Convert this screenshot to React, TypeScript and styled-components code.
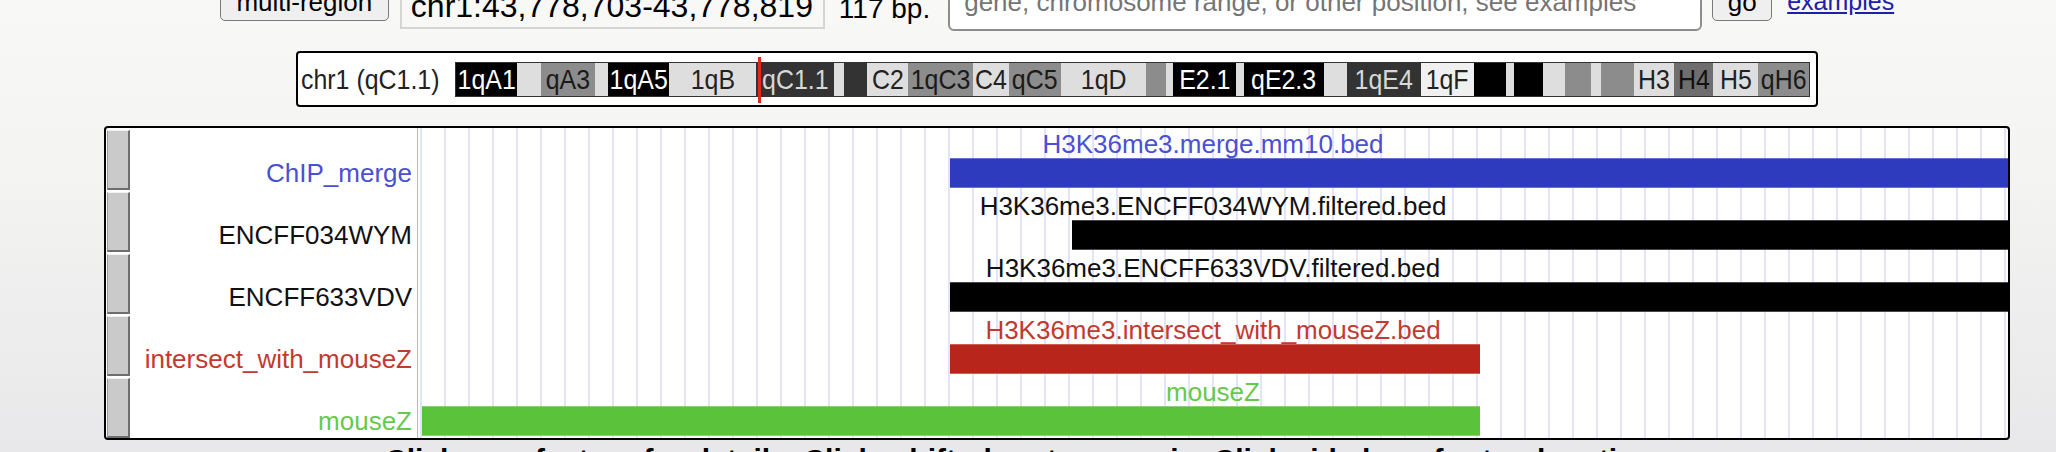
import React from "react";
import styled, { createGlobalStyle } from "styled-components";

// Browser page: position form, chromosome ideogram and track image

const GlobalStyle = createGlobalStyle`
  html, body {
    margin: 0;
    padding: 0;
  }
  body {
    width: 2056px;
    height: 452px;
    overflow: hidden;
    background: linear-gradient(#f8f8f6 0px, #f4f4f2 160px, #e8e8ea 452px);
    font-family: "Liberation Sans", Arial, Helvetica, sans-serif;
    color: #000;
  }
`;

const Page = styled.div`
  width: 1906px;
  margin-left: 104px;
  display: flex;
  flex-direction: column;
  align-items: center;
`;

/* ---------- top form ---------- */

const TopForm = styled.div`
  display: flex;
  align-items: flex-end;
  height: 58px;
  margin-top: -27px;
`;

const FormButton = styled.button<{ $w: number }>`
  width: ${(p) => p.$w}px;
  height: 38px;
  margin-bottom: 10px;
  padding: 0;
  border: 1px solid #7a7a7a;
  border-radius: 5px;
  background: #efefef;
  font-family: inherit;
  font-size: 26px;
  line-height: 36px;
  color: #000;
`;

const PositionBox = styled.div`
  box-sizing: border-box;
  width: 425px;
  height: 46px;
  margin-left: 11px;
  margin-bottom: 2px;
  padding-left: 9px;
  border: 2px solid #d5d5d3;
  font-size: 32px;
  line-height: 42px;
  white-space: nowrap;
`;

const SizeText = styled.span`
  margin-left: 14px;
  margin-bottom: 7px;
  font-size: 28px;
  line-height: 30px;
  white-space: nowrap;
`;

const SearchInput = styled.input`
  box-sizing: border-box;
  width: 754px;
  height: 58px;
  margin-left: 18px;
  padding: 0 0 0 14px;
  border: 2px solid #8d8d8d;
  border-radius: 6px;
  background: #fff;
  font-family: inherit;
  font-size: 26px;
  outline: none;

  &::placeholder {
    color: #757575;
  }
`;

const ExamplesLink = styled.a`
  margin-left: 15px;
  margin-bottom: 16px;
  font-size: 25px;
  line-height: 28px;
  color: #1d20a8;
  text-decoration: underline;
  white-space: nowrap;
`;

/* ---------- ideogram ---------- */

const IdeoBox = styled.div`
  box-sizing: border-box;
  width: 1522px;
  height: 56px;
  margin-top: 20px;
  padding: 0 5px 0 3px;
  border: 2px solid #000;
  border-radius: 4px;
  background: #fff;
  display: flex;
  align-items: center;
`;

const ChromLabel = styled.span`
  width: 154px;
  flex-shrink: 0;
  font-size: 28px;
  line-height: 33px;
  color: #222;
  white-space: nowrap;
  transform: scaleX(0.89);
  transform-origin: left center;
`;

const BandStrip = styled.div`
  position: relative;
  display: flex;
  height: 35px;
  box-sizing: border-box;
  border: 1px solid #333;
`;

const bandFill: Record<string, [string, string]> = {
  black: ["#000", "#fff"],
  dark: ["#333", "#d8d8d8"],
  gray: ["#8c8c8c", "#1a1a1a"],
  mid: ["#6e6e6e", "#111"],
  light: ["#dedede", "#222"],
  pale: ["#f0f0f0", "#222"],
};

const Band = styled.div<{ $tone: string }>`
  flex-shrink: 0;
  display: flex;
  justify-content: center;
  overflow: hidden;
  background: ${(p) => bandFill[p.$tone][0]};
  color: ${(p) => bandFill[p.$tone][1]};
`;

const BandName = styled.span`
  display: inline-block;
  font-size: 28px;
  line-height: 33px;
  white-space: nowrap;
  transform: scaleX(0.89);
`;

const PosMarker = styled.div`
  position: absolute;
  top: -6px;
  width: 3px;
  height: 46px;
  background: #e3261a;
`;

/* ---------- tracks ---------- */

const TrackImage = styled.div`
  width: 1906px;
  margin-top: 19px;
  border: 2px solid #000;
  border-radius: 4px;
  background: #fff;
  box-sizing: border-box;
  overflow: hidden;
`;

const TrackRow = styled.div`
  display: flex;
  height: 62px;
`;

const SideButton = styled.div`
  box-sizing: border-box;
  width: 23px;
  height: 60px;
  margin: 2px 0 0 1px;
  flex-shrink: 0;
  background: #cacaca;
  border-top: 1px solid #f2f2f2;
  border-left: 1px solid #9a9a9a;
  border-right: 2px solid #6e6e6e;
  border-bottom: 2px solid #6e6e6e;
`;

const TrackLabel = styled.div<{ $color: string }>`
  box-sizing: border-box;
  width: 287px;
  flex-shrink: 0;
  display: flex;
  align-items: flex-end;
  justify-content: flex-end;
  padding: 0 5px 2px 0;
  font-size: 26px;
  line-height: 30px;
  color: ${(p) => p.$color};
  white-space: nowrap;
`;

const DataArea = styled.div`
  flex: 1;
  display: flex;
  flex-direction: column;
  border-left: 1px solid #eda49c;
  background-image: linear-gradient(to right, transparent 22px, #e3e3fb 22px);
  background-size: 24px 100%;
  background-position: 4px 0;
`;

const FeatureTitle = styled.div<{ $color: string }>`
  box-sizing: border-box;
  height: 30px;
  padding-top: 2px;
  font-size: 26px;
  line-height: 28px;
  text-align: center;
  color: ${(p) => p.$color};
  white-space: nowrap;
`;

const FeatureLane = styled.div`
  display: flex;
  height: 30px;
`;

const FeatureBar = styled.div<{ $color: string }>`
  height: 30px;
  background: ${(p) => p.$color};
  box-shadow: inset 0 1px 0 rgba(255, 255, 255, 0.28),
    inset 0 -1px 0 rgba(255, 255, 255, 0.28);
`;

const HelpText = styled.div`
  align-self: flex-start;
  margin: 3px 0 0 281px;
  font-size: 30px;
  font-weight: bold;
  line-height: 34px;
  white-space: nowrap;
`;

const bands: [number, string, string][] = [
  [61, "black", "1qA1"],
  [24, "light", ""],
  [54, "gray", "qA3"],
  [13, "light", ""],
  [61, "black", "1qA5"],
  [87, "light", "1qB"],
  [78, "dark", "qC1.1"],
  [10, "light", ""],
  [23, "dark", ""],
  [41, "light", "C2"],
  [65, "gray", "1qC3"],
  [36, "light", "C4"],
  [52, "gray", "qC5"],
  [85, "light", "1qD"],
  [20, "gray", ""],
  [7, "light", ""],
  [63, "black", "E2.1"],
  [8, "light", ""],
  [80, "black", "qE2.3"],
  [23, "light", ""],
  [74, "dark", "1qE4"],
  [53, "pale", "1qF"],
  [32, "black", ""],
  [8, "light", ""],
  [29, "black", ""],
  [22, "light", ""],
  [26, "gray", ""],
  [10, "light", ""],
  [33, "gray", ""],
  [40, "light", "H3"],
  [39, "mid", "H4"],
  [45, "light", "H5"],
  [51, "gray", "qH6"],
];

const DATA_WIDTH = 1590;

const tracks = [
  {
    label: "ChIP_merge",
    title: "H3K36me3.merge.mm10.bed",
    color: "#2f3bbe",
    text: "#4a50d4",
    start: 532,
    end: DATA_WIDTH,
  },
  {
    label: "ENCFF034WYM",
    title: "H3K36me3.ENCFF034WYM.filtered.bed",
    color: "#000000",
    text: "#111111",
    start: 654,
    end: DATA_WIDTH,
  },
  {
    label: "ENCFF633VDV",
    title: "H3K36me3.ENCFF633VDV.filtered.bed",
    color: "#000000",
    text: "#111111",
    start: 532,
    end: DATA_WIDTH,
  },
  {
    label: "intersect_with_mouseZ",
    title: "H3K36me3.intersect_with_mouseZ.bed",
    color: "#b8261b",
    text: "#c4392e",
    start: 532,
    end: 1062,
  },
  {
    label: "mouseZ",
    title: "mouseZ",
    color: "#5bc23b",
    text: "#66c94c",
    start: 4,
    end: 1062,
  },
];

const App = () => {
  return (
    <>
      <GlobalStyle />
      <Page>
        <TopForm>
          <FormButton $w={169}>multi-region</FormButton>
          <PositionBox>chr1:43,778,703-43,778,819</PositionBox>
          <SizeText>117 bp.</SizeText>
          <SearchInput placeholder="gene, chromosome range, or other position, see examples" />
          <FormButton $w={60} style={{ marginLeft: 10 }}>
            go
          </FormButton>
          <ExamplesLink href="#">examples</ExamplesLink>
        </TopForm>

        <IdeoBox>
          <ChromLabel>chr1 (qC1.1)</ChromLabel>
          <BandStrip>
            {bands.map(([w, tone, name], i) => (
              <Band key={i} $tone={tone} style={{ width: w }}>
                {name && <BandName>{name}</BandName>}
              </Band>
            ))}
            <PosMarker style={{ left: 302 }} />
          </BandStrip>
        </IdeoBox>

        <TrackImage>
          {tracks.map((t) => (
            <TrackRow key={t.label}>
              <SideButton />
              <TrackLabel $color={t.text}>{t.label}</TrackLabel>
              <DataArea>
                <FeatureTitle $color={t.text}>{t.title}</FeatureTitle>
                <FeatureLane>
                  <FeatureBar
                    $color={t.color}
                    style={{ marginLeft: t.start, width: t.end - t.start }}
                  />
                </FeatureLane>
              </DataArea>
            </TrackRow>
          ))}
        </TrackImage>

        <HelpText>
          Click on a feature for details. Click+shift+drag to zoom in. Click
          side bars for track options.
        </HelpText>
      </Page>
    </>
  );
};

export default App;
